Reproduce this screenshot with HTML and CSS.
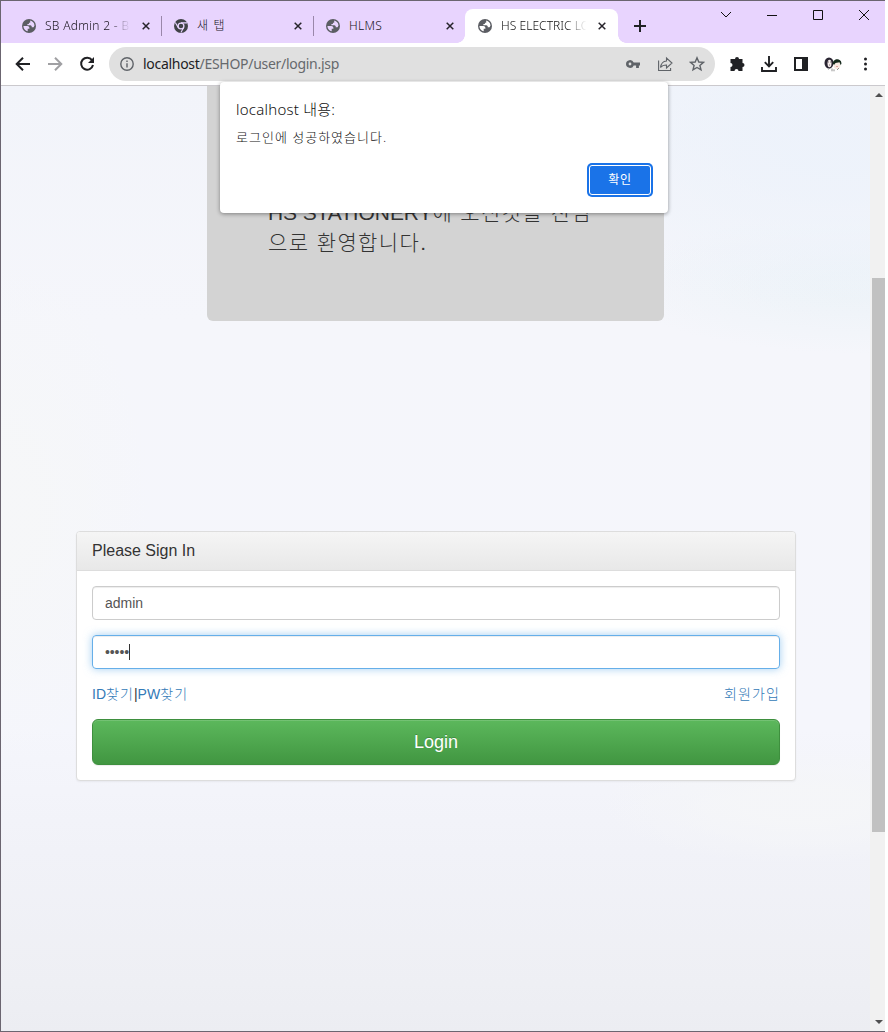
FILE: index.html
```html
<!DOCTYPE html>
<html lang="ko">
<head>
<meta charset="utf-8">
<title>HS ELECTRIC LOGIN</title>
<link rel="stylesheet" href="styles.css">
</head>
<body>
<svg class="defs" width="0" height="0">
  <symbol id="globe" viewBox="0 0 14 14"><circle cx="7" cy="7" r="7" fill="#5b5d63"/><path d="M1.500 6.900h3.900q1.900.1 2 1.800v1H5.700v2.500Q2.200 11.500 1.500 8Z" fill="currentColor"/><path d="M8.200 1.600Q12 2.500 12.500 6.500L11.600 8.300H9.700V7.100L8.500 6.300H5.400V5h1.500V3.700h1.300Z" fill="currentColor"/></symbol>
  <symbol id="close" viewBox="0 0 8 8"><path d="m.7.7 6.600 6.600m0-6.600L.7 7.300" stroke="#26232a" stroke-width="1.500" fill="none"/></symbol>
</svg>
<div class="window">
  <header class="tabs">
    <div class="tab"><svg class="fav"><use href="#globe"/></svg><span class="title fade">SB Admin 2 - B</span><svg class="x"><use href="#close"/></svg></div>
    <div class="tab"><svg class="fav" viewBox="0 0 14 14"><circle cx="7" cy="7" r="7" fill="#404247"/><circle cx="7" cy="7" r="2.900" fill="#404247" stroke="#e8d4fe" stroke-width="1.300"/><path d="M7 3.900h6M4.300 8.600 1.300 3.500M9.700 8.600 6.900 13.600" stroke="#e8d4fe" stroke-width="1.100"/></svg><span class="title spaced">새 탭</span><svg class="x"><use href="#close"/></svg></div>
    <div class="tab last"><svg class="fav"><use href="#globe"/></svg><span class="title">HLMS</span><svg class="x"><use href="#close"/></svg></div>
    <div class="tab active"><svg class="fav"><use href="#globe"/></svg><span class="title fade">HS ELECTRIC LO</span><svg class="x"><use href="#close"/></svg></div>
    <svg class="plus" viewBox="0 0 12 12"><path d="M6 0v12M0 6h12" stroke="#202124" stroke-width="2"/></svg>
    <div class="controls">
      <svg viewBox="0 0 12 12"><path d="m1 3 5 5 5-5"/></svg>
      <svg viewBox="0 0 12 12"><path d="M1 6.500h10"/></svg>
      <svg viewBox="0 0 12 12"><path d="M1.500 1.500h9v9h-9z"/></svg>
      <svg viewBox="0 0 12 12"><path d="m1 1 10 10m0-10L1 11"/></svg>
    </div>
  </header>
  <nav class="toolbar">
    <div class="nav">
      <svg viewBox="0 0 16 16"><path d="M15 8H2M8 1.700 1.700 8 8 14.300"/></svg>
      <svg class="off" viewBox="0 0 16 16"><path d="M1 8h13M8 1.700 14.300 8 8 14.300"/></svg>
      <svg viewBox="0 0 16 16"><path d="M13 4.100A6 6 0 1 0 14 9"/><path d="M15 1v6H9z" fill="#202124" stroke="none"/></svg>
    </div>
    <div class="address">
      <svg class="info" viewBox="0 0 14 14"><circle cx="7" cy="7" r="6.200"/><path d="M7 6.200v4.300M7 3.400v1.600"/></svg>
      <span class="url"><b>localhost</b>/ESHOP/user/login.jsp</span>
      <svg class="key" viewBox="0 0 16 16"><path d="M1 8a4 4 0 0 1 7.700-1.400H15v2.800h-1.100V12h-2.800V9.400H8.700A4 4 0 0 1 1 8Zm2.600 0a1.400 1.400 0 1 0 2.800 0 1.400 1.400 0 1 0-2.800 0Z" fill="#5f6368" fill-rule="evenodd" stroke="none"/></svg>
      <svg viewBox="0 0 16 16"><path d="M1.600 4.500v10h12V12M9.500 2v3C5.500 5.200 4 8 3.500 11.500 5 9.500 6.500 9 9.500 9v3L15 7Z"/></svg>
      <svg viewBox="0 0 16 16"><path d="m8 1.800 1.800 4.200 4.600.4-3.500 3 1.100 4.500L8 11.500l-4 2.400 1.100-4.500-3.500-3L6.200 6Z" stroke-width="1.400"/></svg>
    </div>
    <div class="actions">
      <svg viewBox="0 0 16 16"><path d="M2.500 3H6a2 2 0 1 1 4 0h3.500v4a2 2 0 1 1 0 4v4h-4a2 2 0 0 0-4 0h-4v-4a2 2 0 0 0 0-4V3Z" fill="#202124"/></svg>
      <svg viewBox="0 0 16 16"><path d="M8 0v10M3.800 6.200 8 10.400l4.200-4.200M1 11v4h14v-4" fill="none" stroke="#202124" stroke-width="1.900"/></svg>
      <svg viewBox="0 0 16 16"><path d="M1 1h14v14H1Zm2 2v10h6V3Z" fill="#202124" fill-rule="evenodd"/></svg>
      <svg class="avatar" viewBox="0 0 18 16"><ellipse cx="5" cy="7" rx="4.500" ry="5.500" fill="#292431"/><ellipse cx="5.500" cy="7.500" rx="2" ry="3.800" fill="#f7eeee"/><path d="M4 6h1m1 0h1M5 9h1" stroke="#655" stroke-width=".8"/><ellipse cx="13" cy="8.500" rx="3.500" ry="4.500" fill="#f8e9e2"/><path d="M8.700 8c0-5.500 8-6.500 8.800-.8l-.7 2-1.300-3-4 .8-1.300 1.800Z" fill="#14281b"/><path d="M4.500 13.500 6 12m2 .5v2.800m2-2v2M13 14l2-2" stroke="#777" stroke-width=".8"/><path d="M12 10.500h2" stroke="#d88" stroke-width=".7"/></svg>
      <svg viewBox="0 0 16 16"><g fill="#202124"><circle cx="8.500" cy="3" r="1.500"/><circle cx="8.500" cy="8" r="1.500"/><circle cx="8.500" cy="13" r="1.500"/></g></svg>
    </div>
  </nav>
  <div class="view">
    <main class="page">
      <section class="jumbo"><p><span>HS STATIONERY</span>에 오신것을 진심<br>으로 환영합니다.</p></section>
      <section class="panel">
        <h3>Please Sign In</h3>
        <div class="body">
          <div class="field">admin</div>
          <div class="field focus"><span class="dots">•••••</span><i class="caret"></i></div>
          <div class="links"><span><a>ID<em>찾기</em></a>|<a>PW<em>찾기</em></a></span><a><em>회원가입</em></a></div>
          <div class="login">Login</div>
        </div>
      </section>
    </main>
    <aside class="scroll">
      <svg viewBox="0 0 8 4"><path d="M4 0 8 4H0z"/></svg>
      <div class="thumb"></div>
      <svg class="down" viewBox="0 0 8 4"><path d="M0 0h8L4 4z"/></svg>
    </aside>
  </div>
  <div class="dialog">
    <div class="origin">localhost 내용:</div>
    <div class="message">로그인에 성공하였습니다.</div>
    <div class="ok">확인</div>
  </div>
</div>
</body>
</html>
```
FILE: styles.css
```css
* { box-sizing: border-box; }
body { margin: 0; background: #fff; font-family: "Liberation Sans", "Noto Sans CJK KR", sans-serif; overflow: hidden; }
svg { display: block; flex: none; }
em { font-style: normal; letter-spacing: 1.100px; }
.defs { position: absolute; }
.window { position: relative; width: 885px; height: 1032px; border: solid #6b6570; border-width: 1px 0 1px 1px; display: flex; flex-direction: column; overflow: hidden; }

.tabs { height: 42px; flex: none; background: #e8d4fe; display: flex; align-items: flex-end; padding-left: 8px; font: 12px "Noto Sans", "Noto Sans CJK KR", sans-serif; color: #19151d; }
.tab { width: 152px; height: 34px; display: flex; align-items: center; padding: 0 11px 0 13px; position: relative; }
.tab:not(.active):not(.last)::after { content: ""; position: absolute; right: -1px; top: 7px; width: 1px; height: 20px; background: #9a87aa; }
.fav { width: 14px; height: 14px; margin-right: 9px; color: #e8d4fe; }
.active .fav { color: #fff; }
.title { flex: 1; min-width: 0; white-space: nowrap; line-height: 18px; margin-right: 10px; font-weight: 300; letter-spacing: .3px; }
.active .title { letter-spacing: .05px; }
.title.spaced { letter-spacing: 1.200px; }
.fade { -webkit-mask-image: linear-gradient(90deg, #000 74%, transparent 98%); mask-image: linear-gradient(90deg, #000 74%, transparent 98%); }
.x { width: 8px; height: 8px; }
.active { width: 153px; padding-right: 12px; background: #fff; border-radius: 8px 8px 0 0; color: #111; }
.active::before, .active::after { content: ""; position: absolute; bottom: 0; width: 8px; height: 8px; }
.active::before { left: -8px; background: radial-gradient(circle at 0 0, transparent 7.500px, #fff 8px); }
.active::after { right: -8px; background: radial-gradient(circle at 100% 0, transparent 7.500px, #fff 8px); }
.plus { width: 12px; height: 12px; margin: 0 0 11px 16px; }
.controls { display: flex; gap: 34px; margin-left: auto; margin-right: 15px; align-self: flex-start; padding-top: 8px; }
.controls svg { width: 12px; height: 12px; fill: none; stroke: #111; stroke-width: 1; }

.toolbar { height: 43px; flex: none; display: flex; align-items: center; background: #fff; border-bottom: 1px solid #cbc9cd; padding-left: 14px; }
.nav { display: flex; gap: 16px; }
.nav svg { width: 16px; height: 16px; fill: none; stroke: #202124; stroke-width: 2; }
.nav .off { stroke: #a0a0a3; }
.address { width: 606px; height: 34px; margin-left: 14px; padding: 0 10px 0 11px; border-radius: 17px; background: #e0e0e0; display: flex; align-items: center; gap: 16px; }
.address svg { width: 16px; height: 16px; fill: none; stroke: #5f6368; stroke-width: 1.100; }
.address .info { width: 14px; height: 14px; stroke-width: 1.400; margin-right: -7px; }
.url { flex: 1; font: 14px/20px "Noto Sans", sans-serif; letter-spacing: -.29px; color: #66696d; }
.url b { font-weight: 400; color: #202124; }
.actions { display: flex; gap: 16px; margin-left: 14px; }
.actions svg { width: 16px; height: 16px; }
.actions .avatar { width: 18px; margin: 0 -1px; }

.view { flex: 1; min-height: 0; display: flex; }
.page { flex: 1; padding-left: 75px; background: radial-gradient(ellipse 360px 180px at 97% 5%, rgba(236,242,251,.8) 20%, rgba(236,242,251,0)), radial-gradient(ellipse 260px 70px at 100% 21%, rgba(237,243,248,.9) 20%, rgba(237,243,248,0)), radial-gradient(ellipse 150px 250px at 0 45%, rgba(246,247,248,.9) 20%, rgba(246,247,248,0)), radial-gradient(ellipse 200px 60px at 92% 76%, rgba(245,246,248,.9) 30%, rgba(245,246,248,0)), linear-gradient(#f2f4fa, #f5f6fb 25%, #f5f6fc 68%, #f1f2f8 81%, #eeeff4 95%, #ecedf2); }
.jumbo { width: 457px; height: 235px; margin-left: 131px; padding: 112px 60px 0 61px; border-radius: 0 0 6px 6px; background: #d3d3d3; color: #333; }
.jumbo p { margin: 0; font-size: 21px; font-weight: 300; line-height: 30px; letter-spacing: 1.400px; white-space: nowrap; }
.jumbo span { letter-spacing: -.1px; }
.panel { width: 720px; height: 250px; margin-top: 210px; background: #fff; border: 1px solid #ddd; border-radius: 4px; box-shadow: 0 1px 2px rgba(0,0,0,.05); color: #333; }
.panel h3 { height: 39px; margin: 0; padding-left: 15px; border-bottom: 1px solid #ddd; border-radius: 3px 3px 0 0; background: linear-gradient(#f5f5f5, #e8e8e8); font-size: 16px; font-weight: 400; line-height: 37px; }
.body { padding: 15px; }
.field { height: 34px; margin-bottom: 15px; padding: 0 12px; border: 1px solid #ccc; border-radius: 4px; box-shadow: inset 0 1px 1px rgba(0,0,0,.075); font-size: 14px; line-height: 32px; color: #555; display: flex; align-items: center; }
.focus { border-color: #66afe9; box-shadow: inset 0 1px 1px rgba(0,0,0,.075), 0 0 8px rgba(102,175,233,.6); }
.dots { letter-spacing: -.1px; }
.caret { width: 1px; height: 16px; background: #333; }
.links { display: flex; justify-content: space-between; height: 20px; font-size: 14px; font-weight: 300; line-height: 20px; }
.links a { color: #337ab7; }
.login { height: 46px; margin-top: 15px; border: 1px solid #3e8f3e; border-radius: 6px; background: linear-gradient(#5cb85c, #419641); box-shadow: inset 0 1px 0 rgba(255,255,255,.15), 0 1px 1px rgba(0,0,0,.075); color: #fff; font-size: 18px; line-height: 44px; text-align: center; text-shadow: 0 -1px 0 rgba(0,0,0,.2); }

.scroll { width: 15px; background: #f1f1f1; display: flex; flex-direction: column; padding: 7px 0 7px 2px; }
.scroll svg { width: 8px; height: 4px; margin-left: 3px; fill: #505050; }
.thumb { height: 554px; margin-top: 181px; background: #c1c1c1; }
.scroll .down { margin-top: auto; }

.dialog { position: absolute; left: 219px; top: 81px; width: 448px; height: 131px; padding: 15px 16px; background: #fff; border-radius: 4px; box-shadow: 0 1px 4px rgba(0,0,0,.4); font-family: "Noto Sans", "Noto Sans CJK KR", sans-serif; color: #111; display: flex; flex-direction: column; }
.origin { font-size: 15px; line-height: 24px; font-weight: 300; letter-spacing: .24px; }
.message { margin-top: 6px; font-size: 13px; line-height: 20px; font-weight: 300; letter-spacing: 1px; }
.ok { width: 62px; height: 30px; margin: 18px 1px 0 auto; border: 1px solid #fff; border-radius: 3px; background: #1a73e8; box-shadow: 0 0 0 2px #1a73e8; color: #fff; font-size: 12px; line-height: 27px; letter-spacing: .8px; text-align: center; }
```
